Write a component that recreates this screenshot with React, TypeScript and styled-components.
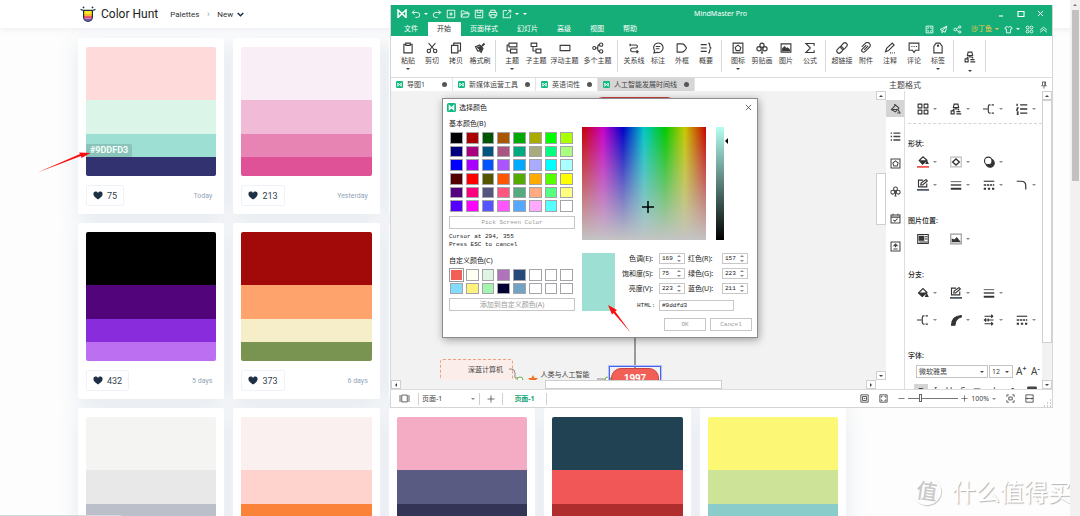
import React from "react";
import styled, { createGlobalStyle, css } from "styled-components";

const UI = `"Noto Sans", "Noto Sans CJK SC", sans-serif`;
const MONO = `"Liberation Mono", "Noto Sans CJK SC", monospace`;
const WEB = `Roboto, "Noto Sans CJK SC", sans-serif`;

const GlobalStyle = createGlobalStyle`
  *, *::before, *::after { box-sizing: border-box; }
  html, body { margin: 0; height: 100%; overflow: hidden; }
  body { font-family: ${UI}; background: #fdfdfd; }
  button, input, select { font: inherit; color: inherit; margin: 0; padding: 0; border: 0; background: none; border-radius: 0; }
  svg { display: block; flex: none; }
`;

/* ---------- icons ---------- */

const icons: Record<string, React.ReactNode> = {
  undo: <path d="M5.5 2 2 5.5 5.5 9M2.500 5.500H10a4 4 0 0 1 0 8H7" />,
  redo: <path d="M10.500 2 14 5.500 10.500 9M13.500 5.500H6a4 4 0 0 0 0 8h3" />,
  add: <path d="M2 2h12v12H2zM8 5v6M5 8h6" />,
  open: <path d="M2 13V3h4l1.500 2H13v2.500M2 13l2.500-5.500h10.500L13 13z" />,
  save: <path d="M2 2h12v12H2zM5 2v4h6V2M4.500 10.500h7" />,
  print: <path d="M4.500 5V2h7v3M4.500 11H2V5.500h12V11h-2.500M4.500 9h7v5h-7z" />,
  share: <path d="M8 2.500H2V14h11.500V9M7 9.500 14 2.500M10 2h4v4" />,
  full: <path d="M2 2h12v12H2zM5 7V5h2M9 5h2v2M11 9v2H9M7 11H5V9" />,
  send: <path d="M14 2 2 8l3.500 2L14 2l-3 11-4-2.500M5.500 10v4L7.500 11" />,
  nodes: <><circle cx="4" cy="8" r="2.300" /><circle cx="12" cy="3.500" r="2" /><circle cx="12" cy="12.500" r="2" /><path d="M6 7l4.200-2.500M6 9l4.200 2.500" /></>,
  shirt: <path d="M5.500 2.500 1.500 5 3 8l1.500-.5V14h7V7.500L13 8l1.500-3-4-2.500c-.5 2-4.500 2-5 0z" />,
  four: <><circle cx="4.500" cy="4.500" r="2.500" /><circle cx="11.500" cy="4.500" r="2.500" /><circle cx="4.500" cy="11.500" r="2.500" /><circle cx="11.500" cy="11.500" r="2.500" /></>,
  up: <path d="M2 9l6-5 6 5M2 13l6-5 6 5" />,
  paste: <path d="M5 3H2.500v11.500h11V3H11M5 1.500h6v3H5z" />,
  cut: <><circle cx="3.800" cy="12" r="2.300" /><circle cx="12.200" cy="12" r="2.300" /><path d="M5.200 10 12.500 1.500M10.800 10 3.500 1.500" /></>,
  copy: <path d="M2 4.500h8.500v10H2zM5 4.500v-3h9V12h-3.500" />,
  brush: <><path d="M10.500 5.500 14 2" strokeWidth="2.400" /><path d="M2 6.500 7.500 4l4.500 4.500L9.500 14 7.500 11.500 5 12z" /><path d="M5 7.500 9 6l2 2.500-1.500 3z" fill="currentColor" /></>,
  topic: <path d="M4 1.500h10.500v5H4zM6 9.500h8.500v5H6zM4 4H1.500v8H6" />,
  sub: <path d="M1.500 1.500H9v4.500H1.500zM8 9.500h6.500v5H8zM4 6v6h4" />,
  float: <path d="M1.500 4.500h13v7h-13z" />,
  multi: <><circle cx="3" cy="8" r="2" /><path d="M5 8h2.500M10 3.500Q7.500 3.500 7.500 8T10 12.500" /><circle cx="12.200" cy="3.500" r="2.200" /><circle cx="12.200" cy="12.500" r="2.200" /></>,
  relation: <path d="M2 2.500l2 1.500-2 1.500M5 4h5.500a2 2 0 0 1 0 4H6a2.500 2.500 0 0 0 0 5h7M11.500 11l2 2-2 2" />,
  callout: <path d="M2.500 14.500l1-3A6.300 6.300 0 1 1 7 13.800zM5 6h6M5 9h5" />,
  frame: <path d="M1.500 2.500H8q3 0 6 5.500-3 5.500-6 5.500H1.500z" strokeLinejoin="round" />,
  summary: <path d="M1 3.500h8M1 8h8M1 12.500h8M11 1.500c2 0 2 1 2 3s0 3 2 3.500c-2 .5-2 1.500-2 3.500s0 3-2 3" />,
  mark: <path d="M1.500 1.500h13v13h-13zM8 4.200l3.800 3-1.400 4.300H5.600L4.200 7.200z" />,
  clover: <><circle cx="8" cy="4.300" r="2.800" /><circle cx="4" cy="9" r="2.800" /><circle cx="12" cy="9" r="2.800" /><path d="M8 7v7.500M6.500 14.500h3" /></>,
  picture: <><path d="M1.500 2.500h13v11h-13z" /><path d="M3.500 11.500V9L6 6.500l2.500 2.500L10 8l2.500 2v1.500z" fill="currentColor" /></>,
  sigma: <path d="M13.500 5V2h-11l6 6-6 6h11v-3" />,
  link: <g transform="rotate(-45 8 8)"><rect x="-.5" y="5" width="9.500" height="6" rx="3" /><rect x="7" y="5" width="9.500" height="6" rx="3" /></g>,
  clip: <g transform="rotate(-45 8 8)"><path d="M11 5.500H3.500a2.500 2.500 0 0 0 0 5H13a4 4 0 0 0 0-7.500H5M4.500 8H12" /></g>,
  note: <path d="M2 13l1.500-4.500L11 1.500l2.500 2.500L6 11.500zM8 14.500h1.500M11 14.500h1M13.500 14.500h1" />,
  comment: <path d="M1.500 1.500h13v9.500H10l-2 3-2-3H1.500zM4.500 6H6M7.500 6H9M10.500 6H12" />,
  tag: <><path d="M2.500 14.500V5.500l3-4h5l3 4v9z" /><circle cx="8" cy="5" r=".8" /></>,
  org: <path d="M5.500 1.500h5l1 4.500h-7zM8 6v2M3.500 10.500 5 8h6l1 2M1.500 10.500h4v4h-4zM8.500 11.500H14M8.500 14.500H15" />,
  grid: <path d="M1.500 1.500h5v5h-5zM9.500 1.500h5v5h-5zM1.500 9.500h5v5h-5zM9.500 9.500h5v5h-5z" strokeLinejoin="round" />,
  branch: <path d="M0 8h6M10 2.500H9Q7 2.500 7 5v6q0 2.500 2 2.500h1M11.500 2.500h3M11.500 13.500h3" />,
  numbered: <path d="M5.500 2.500H15M5.500 8H15M5.500 13.500H15M1.500 1v3M1 6.500h1.500L1 9.500h1.500M1 12h1.500v3H1" strokeWidth="1.800" />,
  list: <path d="M5 3h10M5 8h10M5 13h10M1 3h2M1 8h2M1 13h2" strokeWidth="2" />,
  format: <path d="M2 9.500 8 3l5 4.500-5 5.500zM3 9.500h9.500M12 10l2.500 4.500h-4M6 1.500 9 4" />,
  calendar: <path d="M1.500 3h13v11.500h-13zM1.500 6h13M4.500 1v3M11.500 1v3M5 10l2 2 4-4" />,
  upload: <><path d="M1.500 1.500h13v13h-13zM8 9V6M5 11.500h6" /><path d="M5.500 7 8 4.500 10.500 7z" fill="currentColor" /></>,
  fill: <><path d="M2 8 8 2l5 5-6 5.500z" /><path d="M3 8h9.500L7 12zM13 9.500l1.500 3h-3z" fill="currentColor" /></>,
  fillRed: <><path d="M3 6 8 1l5 4.500-5.500 5z" /><path d="M4 6.500h8.500L7.500 10.500zM13.500 7.500l1.200 2.500h-2.500z" fill="currentColor" /><path d="M0 14.500h16" stroke="#f2564d" strokeWidth="2.400" /></>,
  shape: <><path d="M1 1.500h14v13H1z" stroke="#bbb" /><path d="M3.500 8 8 4l4.500 4L8 12z" strokeWidth="1.800" /></>,
  shadow: <><circle cx="9.500" cy="9.500" r="5.500" fill="currentColor" /><circle cx="7" cy="6.500" r="5" fill="#fff" /></>,
  line: <><path d="M8 1.500H2V10.500h11V6" /><path d="M5 8l.5-2.500L12 .8 13.800 2.500 7.500 8z" /><path d="M0 14.500h16" stroke="#4d5968" strokeWidth="2.400" /></>,
  weight: <><path d="M1 3.500h14" strokeWidth="1" /><path d="M1 8h14" strokeWidth="1.800" /><path d="M1 13h14" strokeWidth="2.600" /></>,
  dashes: <><path d="M1 3h14" /><path d="M1 8h14" strokeDasharray="3 1" strokeWidth="1.800" /><path d="M1 13h14" strokeDasharray="3 2.500" strokeWidth="2.600" /></>,
  corner: <path d="M1 3h6q6 0 6 6v5" strokeWidth="1.600" />,
  curve: <path d="M2 15Q2 3 15 2V4Q7 6 6.500 15z" fill="currentColor" />,
  arrows: <path d="M2 3h10M1 8h13M2 13h10M11 1l2 2-2 2M4 6 2 8l2 2M11 11l2 2-2 2M7 6v4" />,
  layout: <><path d="M1 2h14v12H1z" /><path d="M3 4.500h6v5H3z" fill="currentColor" /><path d="M10.500 5H14M10.500 8H14M3 12H14" /></>,
  image: <><path d="M1 1.500h14v13H1z" stroke="#999" /><path d="M3 11.500V8.500l3 1 3-3 4 5z" fill="currentColor" /></>,
  fit: <path d="M1.500 1.500h13v13h-13zM4.500 4.500h7v7h-7zM6.500 8h3" />,
  corners: <path d="M1.500 1.500h13v13h-13zM4 6.500V4h2.500M9.500 4H12v2.500M12 9.500V12H9.500M6.500 12H4V9.500" />,
  focus: <path d="M1.500 5V1.500H5M11 1.500h3.500V5M14.500 11v3.500H11M5 14.500H1.500V11M5 5.500h6v5H5z" />,
  width: <path d="M1.500 1.500h13v13h-13zM1.500 8h13M4 6.500 2.500 8 4 9.500M12 6.500 13.500 8 12 9.500" />,
  pages: <path d="M4 3h8v10H4zM1.500 3v10M14.500 3v10" />,
  plus: <path d="M8 1v14M1 8h14" />,
  minus: <path d="M1 8h14" />,
  minimise: <path d="M4 12h8" />,
  close: <path d="M2 2l12 12M14 2 2 14" />,
  square: <path d="M2 3h12v10H2z" />,
  pin: <path d="M4 2h8M5 2v7M11 2v7M9.500 2v7M2.500 9.500h11M8 10v5" />,
  box: <><path d="M1 2h14v12H1z" /><path d="M1 3h14" strokeWidth="4" /></>,
};

const Icon = ({ name, size = 12, weight = 1.5 }: { name: string; size?: number; weight?: number }) => (
  <svg width={size} height={size} viewBox="0 0 16 16" fill="none" stroke="currentColor" strokeWidth={weight} aria-hidden="true">
    {icons[name]}
  </svg>
);

const Caret = styled.span<{ $soft?: boolean }>`
  flex: none;
  width: 0;
  height: 0;
  border: 2px solid transparent;
  border-top-color: ${(p) => (p.$soft ? "#8a8a8a" : "currentColor")};
  border-bottom: 0;
`;

const AppMark = ({ size }: { size: number }) => (
  <svg width={size} height={size} viewBox="0 0 12 12" aria-hidden="true">
    <rect width="12" height="12" rx="2" fill="#12b981" />
    <path d="M3 9V3.500l3 3 3-3V9L6 6z" fill="none" stroke="#fff" strokeWidth="1.500" />
  </svg>
);

/* ---------- palette site ---------- */

const Site = styled.div`
  position: relative;
  height: 100vh;
  overflow: hidden;
  font-family: ${WEB};
`;

const SiteHeader = styled.header`
  position: relative;
  z-index: 1;
  display: flex;
  align-items: center;
  height: 28px;
  padding-left: 80px;
  background: #fff;
  box-shadow: 0 1px 6px rgba(60, 90, 130, 0.1);
  color: #263238;
`;

const Brand = styled.a`
  display: flex;
  align-items: center;
  gap: 5px;
  margin-right: 12px;
  font-size: 12px;
  color: #222;
  text-decoration: none;
`;

const Crumb = styled.a`
  display: flex;
  align-items: center;
  gap: 4px;
  font-size: 8px;
  color: #333;
  text-decoration: none;
`;

const Separator = styled.span`
  width: 18px;
  text-align: center;
  font-size: 9px;
  color: #8a99a8;
`;

const PaletteGrid = styled.main`
  display: grid;
  grid-template-columns: repeat(5, 1fr);
  gap: 9px;
  padding: 10px 234px 0 78px;
  isolation: isolate;
`;

const Card = styled.article`
  position: relative;
  height: 176px;
  padding: 9px 8px;
  border-radius: 3px;
  background: #fff;
  &::before {
    content: "";
    position: absolute;
    z-index: -1;
    inset: 0;
    box-shadow: 0 5px 20px rgba(60, 100, 150, 0.13);
  }
`;

const Swatches = styled.div`
  display: grid;
  grid-template-rows: 53px 34px 23px 19px;
  overflow: hidden;
  border-radius: 2px;
`;

const Band = styled.div<{ $color: string }>`
  display: flex;
  align-items: flex-end;
  background: ${(p) => p.$color};
`;

const HexTag = styled.span`
  padding: 0 4px;
  background: rgba(0, 0, 0, 0.12);
  border-radius: 0 2px 0 0;
  color: #f4fffb;
  font-size: 9px;
  line-height: 13px;
  font-weight: 700;
`;

const CardFooter = styled.footer`
  display: flex;
  align-items: center;
  justify-content: space-between;
  margin-top: 9px;
  padding-right: 4px;
  color: #92a5b8;
  font-size: 7px;
`;

const LikeButton = styled.button`
  display: flex;
  align-items: center;
  gap: 4px;
  height: 21px;
  padding: 0 6px;
  border: 1px solid #edf3f9;
  border-radius: 2px;
  color: #33414e;
  font-size: 9px;
`;

const Heart = () => (
  <svg width="10" height="9" viewBox="0 0 10 9" aria-hidden="true">
    <path d="M5 8.600C2 6.500.4 5 .4 3A2.400 2.400 0 0 1 5 1.900 2.400 2.400 0 0 1 9.600 3c0 2-1.600 3.500-4.600 5.600z" fill="#1d3044" />
  </svg>
);

const SiteScrollbar = styled.div`
  position: absolute;
  z-index: 2;
  top: 0;
  right: 0;
  bottom: 0;
  display: flex;
  flex-direction: column;
  align-items: center;
  width: 10px;
  padding-top: 4px;
  background: #f1f1f1;
  color: #777;
  ${Caret} { transform: rotate(180deg); }
`;

const SiteThumb = styled.div`
  width: 7px;
  height: 171px;
  margin-top: 4px;
  background: #c1c1c1;
`;

const StatusBubble = styled.div`
  position: absolute;
  left: 0;
  bottom: 0;
  width: 121px;
  height: 1px;
  background: #d5d8dc;
`;

const Watermark = styled.div`
  position: absolute;
  right: 8px;
  bottom: 8px;
  display: flex;
  align-items: center;
  gap: 11px;
  color: #fff;
  font-family: "Noto Sans CJK SC", sans-serif;
  font-size: 24px;
  line-height: 34px;
  text-shadow: 1px 1px 1px #b4b4b4;
  white-space: nowrap;
`;

const WatermarkSeal = styled.span`
  width: 28px;
  height: 28px;
  border: 1px solid #fff;
  border-radius: 50%;
  box-shadow: 1px 1px 1px #c4c4c4;
  font-size: 21px;
  font-weight: 500;
  line-height: 25px;
  text-align: center;
  color: #c9c9c9;
  text-shadow: none;
  transform: rotate(8deg);
`;

type Palette = { colors: string[]; likes?: string; age?: string; tag?: string };

const palettes: Palette[] = [
  { colors: ["#ffdada", "#dbf6e9", "#9ddfd3", "#31326f"], likes: "75", age: "Today", tag: "#9DDFD3" },
  { colors: ["#faeef6", "#f1bad7", "#e884b4", "#e05297"], likes: "213", age: "Yesterday" },
  { colors: [] },
  { colors: [] },
  { colors: [] },
  { colors: ["#000000", "#52057b", "#892cdc", "#bc6ff1"], likes: "432", age: "5 days" },
  { colors: ["#a20a0a", "#ffa36c", "#f6eec9", "#799351"], likes: "373", age: "6 days" },
  { colors: [] },
  { colors: [] },
  { colors: [] },
  { colors: ["#f4f4f2", "#e8e8e8", "#bbbfca", "#495464"] },
  { colors: ["#faf0ef", "#ffd3cd", "#fb8339", "#2b2b2b"] },
  { colors: ["#f4abc4", "#595b83", "#333456", "#060930"] },
  { colors: ["#214252", "#f25757", "#af2d2d", "#7a1c1c"] },
  { colors: ["#fdf776", "#cde398", "#8accca", "#5aa2b0"] },
];

const PaletteCard = ({ p }: { p: Palette }) => (
  <Card>
    <Swatches>
      {p.colors.map((c, i) => (
        <Band key={c} $color={c}>{p.tag && i === 2 && <HexTag>{p.tag}</HexTag>}</Band>
      ))}
    </Swatches>
    {p.likes && (
      <CardFooter>
        <LikeButton type="button"><Heart />{p.likes}</LikeButton>
        <span>{p.age}</span>
      </CardFooter>
    )}
  </Card>
);

/* ---------- MindMaster window ---------- */

const AppWindow = styled.section`
  position: absolute;
  z-index: 3;
  top: 5px;
  left: 390px;
  right: 27px;
  height: 403px;
  display: flex;
  flex-direction: column;
  border: 1px solid #d5d5d5;
  border-top: 0;
  background: #fff;
  color: #444;
  font-family: ${UI};
  font-size: 7px;
  line-height: 10px;
  white-space: nowrap;
`;

const GreenBar = styled.div`
  background: #16ae78;
  color: #fff;
`;

const TitleRow = styled.div`
  display: grid;
  grid-template-columns: 1fr auto 1fr;
  align-items: center;
  height: 17px;
  padding: 0 8px 0 6px;
`;

const QuickTools = styled.div`
  display: flex;
  align-items: center;
  gap: 4px;
`;

const WindowButtons = styled.div`
  display: flex;
  justify-content: flex-end;
  gap: 12px;
`;

const IconButton = styled.button`
  display: flex;
  align-items: center;
  gap: 3px;
`;

const MenuRow = styled.nav`
  display: flex;
  height: 14px;
  padding: 0 4px;
`;

const MenuTab = styled.button<{ $active?: boolean }>`
  padding: 0 10px 0 9px;
  ${(p) => p.$active && css`background: #fff; color: #333;`}
`;

const MenuTools = styled.div`
  display: flex;
  align-items: center;
  gap: 5px;
  margin-left: auto;
`;

const UserButton = styled(IconButton)`
  margin-left: 4px;
  color: #f7c948;
`;

const Ribbon = styled.div`
  display: flex;
  flex: none;
  height: 42px;
  padding: 4px 0 5px 1px;
  border-bottom: 1px solid #dcdcdc;
`;

const RibbonGroup = styled.div`
  display: flex;
  padding: 0 3px 0 4px;
  border-right: 1px solid #d8d8d8;
`;

const RibbonButton = styled.button<{ $wide?: boolean; $low?: boolean }>`
  display: flex;
  flex-direction: column;
  align-items: center;
  width: ${(p) => (p.$wide ? 33 : 24)}px;
  padding-top: ${(p) => (p.$low ? 11 : 2)}px;
  gap: ${(p) => (p.$low ? 7 : 2)}px;
  color: #3a3a3a;
`;

const Workspace = styled.div`
  display: flex;
  flex: 1;
  min-height: 0;
`;

const CanvasColumn = styled.div`
  display: flex;
  flex: 1;
  flex-direction: column;
  min-width: 0;
`;

const DocTabs = styled.div`
  display: flex;
  flex: none;
  height: 13px;
`;

const DocTab = styled.button<{ $active?: boolean }>`
  display: flex;
  align-items: center;
  gap: 4px;
  padding: 0 5px;
  border-right: 1px solid #e4e4e4;
  background: ${(p) => (p.$active ? "#d6d6d6" : "#fff")};
  &::after {
    content: "";
    width: 5px;
    height: 5px;
    margin-left: 3px;
    border-radius: 50%;
    background: #555;
  }
  &:first-child::after { margin-left: 13px; }
`;

const CanvasRow = styled.div`
  display: flex;
  flex: 1;
  min-height: 0;
`;

const Canvas = styled.div`
  position: relative;
  flex: 1;
  overflow: hidden;
  background: #f2f2f2;
`;

const Track = styled.div<{ $horizontal?: boolean }>`
  display: flex;
  flex: none;
  flex-direction: ${(p) => (p.$horizontal ? "row" : "column")};
  ${(p) => (p.$horizontal ? "height: 9px; margin-right: 10px;" : "width: 10px;")}
  background: #f2f2f2;
`;

const TrackButton = styled.button<{ $turn: number }>`
  display: grid;
  flex: none;
  place-items: center;
  width: 10px;
  height: 9px;
  border: 1px solid #cfcfcf;
  background: #fff;
  ${Caret} { transform: rotate(${(p) => p.$turn}deg); }
`;

const TrackSpace = styled.div<{ $grow: number; $thumb?: boolean }>`
  flex: ${(p) => p.$grow} 0 0;
  ${(p) => p.$thumb && css`border: 1px solid #cfcfcf; background: #fff;`}
`;

const Connectors = styled.svg`
  position: absolute;
  inset: 0;
`;

const Node = styled.div<{ $x: number; $y: number; $w: number; $h: number; $kind?: "red" | "dashed" | "selection" }>`
  position: absolute;
  left: ${(p) => p.$x}px;
  top: ${(p) => p.$y}px;
  width: ${(p) => p.$w}px;
  height: ${(p) => p.$h}px;
  text-align: center;
  ${(p) => p.$kind === "red" && css`
    border: 1px solid #c8453d; border-radius: 10px; background: #f25f57;
    color: #fff; font: bold 10px/20px "Liberation Sans", sans-serif;`}
  ${(p) => p.$kind === "dashed" && css`
    padding: 5px 9px 0 0; border: 1px dashed #f0a07a; border-radius: 3px; background: #fbeeea; text-align: right;`}
  ${(p) => p.$kind === "selection" && css`border: 1px solid #4664f0; outline: 1px solid #b4c0fa;`}
`;

const Panel = styled.aside`
  display: flex;
  flex: none;
  flex-direction: column;
  width: 166px;
  background: #fff;
`;

const PanelTitle = styled.div`
  display: flex;
  flex: none;
  align-items: center;
  justify-content: space-between;
  height: 13px;
  padding: 0 4px 0 3px;
  font-size: 8px;
`;

const PanelBody = styled.div`
  display: flex;
  flex: 1;
  min-height: 0;
`;

const SideTabs = styled.div`
  flex: none;
  width: 19px;
  padding-top: 9px;
  border-right: 1px solid #dedede;
`;

const SideTabList = styled.div`
  display: flex;
  flex-direction: column;
  justify-content: space-between;
  height: 155px;
`;

const SideTab = styled.button<{ $active?: boolean }>`
  display: grid;
  place-items: center;
  height: 17px;
  background: ${(p) => (p.$active ? "#d4d4d4" : "none")};
`;

const PanelContent = styled.div`
  flex: 1;
  min-width: 0;
  padding: 11px 0 0 3px;
  overflow: hidden;
`;

const Dotted = styled.hr`
  height: 0;
  margin: 7px 0 -9px;
  border: 0;
  border-top: 1px dashed #d5d5d5;
`;

const SectionTitle = styled.h2`
  margin: 24px 0 6px;
  font-size: 7px;
  line-height: 10px;
  font-weight: 500;
  color: #222;
`;

const ToolRow = styled.div<{ $gap?: number }>`
  display: flex;
  height: 14px;
  margin-top: ${(p) => p.$gap ?? 0}px;
  padding-left: 9px;
`;

const ToolButton = styled.button`
  display: flex;
  flex: none;
  align-items: center;
  gap: 4px;
  width: 33px;
  color: #333;
`;

const FontRow = styled.div`
  display: flex;
  align-items: center;
  gap: 1px;
  height: 13px;
  margin-top: -2px;
  padding-left: 8px;
`;

const SelectBox = styled.label<{ $w: number; $plain?: boolean }>`
  position: relative;
  display: flex;
  flex: none;
  align-items: center;
  width: ${(p) => p.$w}px;
  height: 13px;
  padding: 0 3px 0 2px;
  border: ${(p) => (p.$plain ? "0" : "1px solid #c4c4c4")};
  select { flex: 1; min-width: 0; appearance: none; outline: 0; font-size: 7px; }
`;

const FontSizeButton = styled.button`
  flex: none;
  width: 14px;
  padding-left: 2px;
  font-size: 10px;
  line-height: 13px;
  text-align: left;
  sup { font-size: 7px; line-height: 0; font-weight: 700; }
`;

const StyleRow = styled.div`
  display: flex;
  height: 14px;
  margin-top: 6px;
  padding-left: 6px;
`;

const StyleButton = styled.button<{ $active?: boolean; $wide?: boolean }>`
  display: grid;
  flex: none;
  place-items: center;
  width: ${(p) => (p.$wide ? 19 : 14)}px;
  background: ${(p) => (p.$active ? "#d4d4d4" : "none")};
  font-size: 9px;
`;

const StatusBar = styled.footer`
  display: flex;
  flex: none;
  align-items: center;
  height: 18px;
  border-top: 1px solid #dcdcdc;
`;

const StatusCell = styled.div<{ $w: number }>`
  display: flex;
  align-items: center;
  justify-content: center;
  width: ${(p) => p.$w}px;
  height: 12px;
  border-right: 1px solid #d0d0d0;
`;

const PageTab = styled.button`
  color: #12a570;
  font-weight: 700;
`;

const ZoomTools = styled.div`
  display: flex;
  align-items: center;
  gap: 10px;
  margin-left: auto;
`;

const ZoomSlider = styled.div`
  display: flex;
  align-items: center;
  gap: 3px;
`;

const Range = styled.input`
  width: 50px;
  height: 9px;
  appearance: none;
  &::-webkit-slider-runnable-track { height: 1px; background: #777; }
  &::-webkit-slider-thumb { appearance: none; width: 3px; height: 8px; margin-top: -4px; border: 1px solid #666; background: #fff; }
`;

const Grip = () => (
  <svg width="8" height="16" viewBox="0 0 8 16" aria-hidden="true">
    <path d="M6 9h1M6 12h1M3 12h1M6 15h1M3 15h1M0 15h1" stroke="#999" />
  </svg>
);

/* ---------- colour dialog ---------- */

const Dialog = styled.div`
  position: absolute;
  z-index: 1;
  top: 93px;
  left: 51px;
  width: 316px;
  height: 240px;
  border: 1px solid #8c8c8c;
  background: #fff;
  box-shadow: 1px 2px 8px rgba(0, 0, 0, 0.35);
  color: #222;
`;

const DialogTitle = styled.div`
  display: flex;
  align-items: center;
  gap: 3px;
  height: 17px;
  padding: 0 5px 0 4px;
  button { margin-left: auto; }
`;

const DialogBody = styled.div`
  display: flex;
  gap: 7px;
  padding: 1px 5px 0 6px;
`;

const SwatchColumn = styled.div`
  width: 126px;
`;

const PickerLabel = styled.h3`
  margin: 2px 0;
  font-size: 7px;
  line-height: 10px;
  font-weight: 400;
`;

const SwatchGrid = styled.div<{ $rows: number }>`
  display: grid;
  grid-template: repeat(${(p) => p.$rows}, 1fr) / repeat(8, 1fr);
  height: ${(p) => (p.$rows === 6 ? 82 : 27)}px;
  margin-bottom: 3px;
`;

const Swatch = styled.button<{ $color: string; $selected?: boolean }>`
  margin: 1px 2px 1px 1px;
  border: 1px solid #a4a4aa;
  background: ${(p) => p.$color};
  ${(p) => p.$selected && css`outline: 1px solid #999; outline-offset: 0; border-color: #fff;`}
`;

const DialogButton = styled.button`
  width: 100%;
  height: 13px;
  border: 1px solid #c6c6c6;
  color: #9a9a9a;
  font-family: ${MONO};
  font-size: 6px;
  line-height: 10px;
`;

const CjkButton = styled(DialogButton)`
  font-family: ${UI};
  font-size: 7px;
`;

const Hint = styled.p`
  margin: 4px 0 7px;
  font-family: ${MONO};
  font-size: 6px;
  line-height: 8px;
`;

const PickerColumn = styled.div`
  flex: 1;
  padding-top: 10px;
`;

const PickerRow = styled.div`
  display: flex;
  gap: 10px;
`;

const HueField = styled.div`
  position: relative;
  width: 124px;
  height: 113px;
  background:
    linear-gradient(to bottom, rgba(196, 196, 196, 0), #c4c4c4),
    linear-gradient(to right, #c80000, #c800c8 17%, #0000c8 33%, #00c8c8 50%, #00c800 67%, #c8c800 83%, #c80000);
`;

const Crosshair = styled.svg`
  position: absolute;
  left: 60px;
  top: 74px;
`;

const ValueStrip = styled.div`
  position: relative;
  width: 8px;
  background: linear-gradient(#b4fff1, #000);
`;

const ValueMarker = styled.span`
  position: absolute;
  left: 9px;
  top: 11px;
  border: 3px solid transparent;
  border-right-color: #000;
  border-left: 0;
`;

const ValuesRow = styled.div`
  display: flex;
  gap: 4px;
  margin-top: 13px;
`;

const Preview = styled.div`
  width: 33px;
  height: 58px;
  background: #9ddfd3;
`;

const FieldGrid = styled.div`
  display: grid;
  grid-template-columns: 37px 26px 31px 26px;
  grid-auto-rows: 11px;
  gap: 4px 3px;
  align-items: center;
`;

const FieldLabel = styled.label<{ $end?: boolean; $last?: boolean }>`
  padding-right: ${(p) => (p.$last ? 1 : 3)}px;
  padding-top: ${(p) => (p.$last ? 4 : 0)}px;
  text-align: ${(p) => (p.$end ? "right" : "left")};
`;

const HtmlLabel = styled(FieldLabel)`
  font: 6px/9px ${MONO};
`;

const NumberBox = styled.div`
  display: flex;
  align-items: center;
  height: 11px;
  padding: 0 3px 0 2px;
  border: 1px solid #c8c8c8;
  input { flex: 1; min-width: 0; font: 6px/9px ${MONO}; outline: 0; }
`;

const Spinner = styled.span`
  display: flex;
  flex-direction: column;
  gap: 3px;
  color: #555;
  ${Caret}:first-child { transform: rotate(180deg); }
`;

const HtmlBox = styled.input`
  && { grid-column: span 3; width: 75px; height: 11px; margin-top: 4px; padding-left: 2px; border: 1px solid #c8c8c8; font: 6px/9px ${MONO}; }
`;

const DialogActions = styled.div`
  display: flex;
  justify-content: flex-end;
  gap: 4px;
  margin-top: 7px;
  ${DialogButton} { width: 42px; }
`;

const ArrowLayer = styled.svg`
  position: absolute;
  z-index: 4;
  inset: 0;
  pointer-events: none;
`;

/* ---------- data ---------- */

type Tool = { icon: string; label: string; wide?: boolean; menu?: boolean };

const ribbon: Tool[][] = [
  [
    { icon: "paste", label: "粘贴", menu: true },
    { icon: "cut", label: "剪切" },
    { icon: "copy", label: "拷贝" },
    { icon: "brush", label: "格式刷" },
  ],
  [
    { icon: "topic", label: "主题", menu: true },
    { icon: "sub", label: "子主题" },
    { icon: "float", label: "浮动主题", wide: true },
    { icon: "multi", label: "多个主题", wide: true },
  ],
  [
    { icon: "relation", label: "关系线" },
    { icon: "callout", label: "标注" },
    { icon: "frame", label: "外框" },
    { icon: "summary", label: "概要" },
  ],
  [
    { icon: "mark", label: "图标", menu: true },
    { icon: "clover", label: "剪贴画" },
    { icon: "picture", label: "图片" },
    { icon: "sigma", label: "公式" },
  ],
  [
    { icon: "link", label: "超链接" },
    { icon: "clip", label: "附件" },
    { icon: "note", label: "注释" },
    { icon: "comment", label: "评论" },
    { icon: "tag", label: "标签", menu: true },
  ],
];

const basicColors = (
  "000000 aa0000 005500 aa5500 00aa00 aaaa00 00ff00 aaff00 " +
  "00007f aa007f 00557f aa557f 00aa7f aaaa7f 00ff7f aaff7f " +
  "0000ff aa00ff 0055ff aa55ff 00aaff aaaaff 00ffff aaffff " +
  "550000 ff0000 555500 ff5500 55aa00 ffaa00 55ff00 ffff00 " +
  "55007f ff007f 55557f ff557f 55aa7f ffaa7f 55ff7f ffff7f " +
  "5500ff ff00ff 5555ff ff55ff 55aaff ffaaff 55ffff ffffff"
).split(" ");

const customColors = (
  "f25f57 fffff2 e0f4e4 b072b8 264a7a ffffff ffffff ffffff " +
  "84dcfa fff27a a4f4b0 000032 72a2c4 ffffff ffffff ffffff"
).split(" ");

const fields = [
  ["色调(E):", "169"], ["红色(R):", "157"],
  ["饱和度(S):", "75"], ["绿色(G):", "223"],
  ["亮度(V):", "223"], ["蓝色(U):", "211"],
];

const Tools = ({ names, gap, flat = [] }: { names: string[]; gap?: number; flat?: string[] }) => (
  <ToolRow $gap={gap}>
    {names.map((n) => (
      <ToolButton type="button" key={n} aria-label={n}>
        <Icon name={n} size={12} />
        {!flat.includes(n) && <Caret $soft />}
      </ToolButton>
    ))}
  </ToolRow>
);

const ColorDialog = () => (
  <Dialog role="dialog" aria-label="选择颜色">
    <DialogTitle>
      <AppMark size={9} />
      选择颜色
      <button type="button" aria-label="关闭"><Icon name="close" size={7} /></button>
    </DialogTitle>
    <DialogBody>
      <SwatchColumn>
        <PickerLabel>基本颜色(B)</PickerLabel>
        <SwatchGrid $rows={6}>
          {basicColors.map((c) => <Swatch key={c} type="button" $color={`#${c}`} aria-label={c} />)}
        </SwatchGrid>
        <DialogButton type="button">Pick Screen Color</DialogButton>
        <Hint>Cursor at 294, 355<br />Press ESC to cancel</Hint>
        <PickerLabel>自定义颜色(C)</PickerLabel>
        <SwatchGrid $rows={2}>
          {customColors.map((c, i) => <Swatch key={i} type="button" $color={`#${c}`} $selected={i === 0} aria-label={c} />)}
        </SwatchGrid>
        <CjkButton type="button">添加到自定义颜色(A)</CjkButton>
      </SwatchColumn>
      <PickerColumn>
        <PickerRow>
          <HueField>
            <Crosshair width="12" height="12"><path d="M6 0v12M0 6h12" stroke="#000" strokeWidth="1.500" /></Crosshair>
          </HueField>
          <ValueStrip><ValueMarker /></ValueStrip>
        </PickerRow>
        <ValuesRow>
          <Preview />
          <FieldGrid>
            {fields.map(([label, value], i) => (
              <React.Fragment key={label}>
                <FieldLabel htmlFor={`field-${i}`} $end={i % 2 === 0}>{label}</FieldLabel>
                <NumberBox>
                  <input id={`field-${i}`} defaultValue={value} />
                  <Spinner><Caret $soft /><Caret $soft /></Spinner>
                </NumberBox>
              </React.Fragment>
            ))}
            <HtmlLabel htmlFor="field-html" $end $last>HTML:</HtmlLabel>
            <HtmlBox id="field-html" defaultValue="#9ddfd3" />
          </FieldGrid>
        </ValuesRow>
        <DialogActions>
          <DialogButton type="button">OK</DialogButton>
          <DialogButton type="button">Cancel</DialogButton>
        </DialogActions>
      </PickerColumn>
    </DialogBody>
  </Dialog>
);

const MindMaster = () => (
  <AppWindow>
    <GreenBar>
      <TitleRow>
        <QuickTools>
          <svg width="10" height="9" viewBox="0 0 10 9" aria-hidden="true"><path d="M1 8.500V1l4 3.500L9 1v7.500L5 4.800z" fill="none" stroke="#fff" strokeWidth="1.500" /></svg>
          {["undo", "redo", "add", "open", "save", "print", "share"].map((n) => (
            <IconButton type="button" key={n} aria-label={n}>
              <Icon name={n} size={10} weight={1.4} />
              {(n === "undo" || n === "share") && <Caret />}
            </IconButton>
          ))}
          <Caret />
        </QuickTools>
        <span>MindMaster Pro</span>
        <WindowButtons>
          {["minimise", "square", "close"].map((n) => (
            <IconButton type="button" key={n} aria-label={n}><Icon name={n} size={n === "close" ? 7 : 8} weight={2.2} /></IconButton>
          ))}
        </WindowButtons>
      </TitleRow>
      <MenuRow>
        {["文件", "开始", "页面样式", "幻灯片", "高级", "视图", "帮助"].map((m) => (
          <MenuTab type="button" key={m} $active={m === "开始"}>{m}</MenuTab>
        ))}
        <MenuTools>
          {["full", "send", "nodes"].map((n) => (
            <IconButton type="button" key={n} aria-label={n}><Icon name={n} size={9} /></IconButton>
          ))}
          <UserButton type="button">沙丁鱼<Caret /></UserButton>
          <IconButton type="button" aria-label="shirt"><Icon name="shirt" size={9} /><Caret /></IconButton>
          <IconButton type="button" aria-label="four"><Icon name="four" size={9} /></IconButton>
          <IconButton type="button" aria-label="up"><Icon name="up" size={9} /></IconButton>
        </MenuTools>
      </MenuRow>
    </GreenBar>
    <Ribbon>
      {ribbon.map((group, i) => (
        <RibbonGroup key={i}>
          {group.map((t) => (
            <RibbonButton type="button" key={t.label} $wide={t.wide}>
              <Icon name={t.icon} size={12} />
              {t.label}
              {t.menu && <Caret />}
            </RibbonButton>
          ))}
        </RibbonGroup>
      ))}
      <RibbonGroup>
        <RibbonButton type="button" $low aria-label="布局"><Icon name="org" size={12} /><Caret /></RibbonButton>
      </RibbonGroup>
    </Ribbon>
    <Workspace>
      <CanvasColumn>
        <DocTabs>
          {["导图1", "新媒体运营工具", "英语词性", "人工智能发展时间线"].map((t, i) => (
            <DocTab type="button" key={t} $active={i === 3}><AppMark size={7} />{t}</DocTab>
          ))}
        </DocTabs>
        <CanvasRow>
          <Canvas>
            <Node $x={202} $y={6} $w={84} $h={30} $kind="red" />
            <Node $x={49} $y={268} $w={73} $h={40} $kind="dashed">深蓝计算机</Node>
            <Node $x={148} $y={279} $w={52} $h={10}>人类与人工智能</Node>
            <Connectors width="100%" height="100%">
              <path d="M244 20V278" stroke="#9a9a9a" strokeWidth="2" />
              <path d="M118 278h2q4 0 4 4v5h3M206 288h10" fill="none" stroke="#888" />
              <path d="M142 284l1.500 3h3.500l-3 3h-4l-3-3h3.500z" fill="#f36f21" />
              <circle cx="129" cy="289" r="3" fill="#fff" stroke="#6bb536" />
              <circle cx="217" cy="289" r="3" fill="#fff" stroke="#6bb536" />
            </Connectors>
            <Node $x={218} $y={275} $w={52} $h={30} $kind="selection" />
            <Node $x={220} $y={277} $w={48} $h={24} $kind="red">1997</Node>
          </Canvas>
          <Track>
            <TrackButton type="button" $turn={180} aria-label="上"><Caret /></TrackButton>
            <TrackSpace $grow={74} />
            <TrackSpace $grow={50} $thumb />
            <TrackSpace $grow={148} />
            <TrackButton type="button" $turn={0} aria-label="下"><Caret /></TrackButton>
          </Track>
        </CanvasRow>
        <Track $horizontal>
          <TrackButton type="button" $turn={90} aria-label="左"><Caret /></TrackButton>
          <TrackSpace $grow={145} />
          <TrackSpace $grow={175} $thumb />
          <TrackSpace $grow={145} />
          <TrackButton type="button" $turn={-90} aria-label="右"><Caret /></TrackButton>
        </Track>
      </CanvasColumn>
      <Panel>
        <PanelTitle>主题格式<Icon name="pin" size={8} /></PanelTitle>
        <PanelBody>
          <SideTabs>
            <SideTabList>
              {["format", "list", "mark", "clover", "calendar", "upload"].map((n) => (
                <SideTab type="button" key={n} $active={n === "format"} aria-label={n}><Icon name={n} size={11} /></SideTab>
              ))}
            </SideTabList>
          </SideTabs>
          <PanelContent>
            <Tools names={["grid", "org", "branch", "numbered"]} />
            <Dotted />
            <SectionTitle>形状:</SectionTitle>
            <Tools names={["fillRed", "shape", "shadow"]} />
            <Tools names={["line", "weight", "dashes", "corner"]} gap={9} />
            <SectionTitle>图片位置:</SectionTitle>
            <Tools names={["layout", "image"]} flat={["layout"]} />
            <SectionTitle>分支:</SectionTitle>
            <Tools names={["fill", "line", "weight"]} />
            <Tools names={["branch", "curve", "arrows", "dashes"]} gap={13} />
            <SectionTitle>字体:</SectionTitle>
            <FontRow>
              <SelectBox $w={72}><select aria-label="字体"><option>微软雅黑</option></select><Caret /></SelectBox>
              <SelectBox $w={24}><select aria-label="字号"><option>12</option></select><Caret /></SelectBox>
              <FontSizeButton type="button">A<sup>+</sup></FontSizeButton>
              <FontSizeButton type="button">A<sup>-</sup></FontSizeButton>
            </FontRow>
            <StyleRow>
              <StyleButton type="button" $active><b>B</b></StyleButton>
              <StyleButton type="button"><i>I</i></StyleButton>
              <StyleButton type="button"><u>U</u></StyleButton>
              <StyleButton type="button"><s>S</s></StyleButton>
              <StyleButton type="button">≡</StyleButton>
              <StyleButton type="button" $wide>ab</StyleButton>
              <StyleButton type="button" $wide><b>A</b></StyleButton>
              <StyleButton type="button" $wide aria-label="边框"><Icon name="box" size={10} /></StyleButton>
            </StyleRow>
          </PanelContent>
          <Track>
            <TrackButton type="button" $turn={180} aria-label="上"><Caret /></TrackButton>
            <TrackSpace $grow={243} $thumb />
            <TrackSpace $grow={37} />
            <TrackButton type="button" $turn={0} aria-label="下"><Caret /></TrackButton>
          </Track>
        </PanelBody>
      </Panel>
    </Workspace>
    <StatusBar>
      <StatusCell $w={28}><Icon name="pages" size={11} weight={1.2} /></StatusCell>
      <StatusCell $w={61}>
        <SelectBox $w={58} $plain><select aria-label="页面"><option>页面-1</option></select><Caret $soft /></SelectBox>
      </StatusCell>
      <StatusCell $w={23}><Icon name="plus" size={8} /></StatusCell>
      <StatusCell $w={44}><PageTab type="button">页面-1</PageTab></StatusCell>
      <ZoomTools>
        <Icon name="fit" size={9} />
        <Icon name="corners" size={9} />
        <ZoomSlider>
          <Icon name="minus" size={7} />
          <Range type="range" aria-label="缩放" min={0} max={100} defaultValue={23} />
          <Icon name="plus" size={7} />
          <IconButton type="button">100%<Caret $soft /></IconButton>
        </ZoomSlider>
        <Icon name="focus" size={9} />
        <Icon name="width" size={9} />
        <Grip />
      </ZoomTools>
    </StatusBar>
    <ColorDialog />
  </AppWindow>
);

const BrandLogo = () => (
  <svg width="16" height="17" viewBox="0 0 16 17" aria-hidden="true">
    <clipPath id="pot"><path d="M4 4.500h8V11a4 4 0 0 1-8 0z" /></clipPath>
    <g clipPath="url(#pot)">
      <rect x="3" y="4" width="10" height="6" fill="#fde725" />
      <rect x="3" y="8" width="10" height="2" fill="#fbb829" />
      <rect x="3" y="10" width="10" height="2.500" fill="#f0566a" />
      <rect x="3" y="12.500" width="10" height="4" fill="#8a4fc0" />
    </g>
    <path d="M.6 3.200Q1.500 4.400 3.500 4.400h9q2 0 2.900-1.200M3.600 4.400V11a4.400 4.400 0 0 0 8.800 0V4.400" fill="none" stroke="#1d3044" strokeWidth="1.200" />
    <circle cx="3.500" cy="1.400" r=".9" fill="#1d3044" />
    <circle cx="12.500" cy="1.400" r=".9" fill="#1d3044" />
  </svg>
);

export default function App() {
  return (
    <Site>
      <GlobalStyle />
      <SiteHeader>
        <Brand href="#"><BrandLogo />Color Hunt</Brand>
        <Crumb href="#">Palettes</Crumb>
        <Separator>›</Separator>
        <Crumb href="#">
          New
          <svg width="7" height="5" viewBox="0 0 7 5" aria-hidden="true"><path d="M.7 1l2.800 2.800L6.300 1" fill="none" stroke="#1d3044" strokeWidth="1.500" /></svg>
        </Crumb>
      </SiteHeader>
      <PaletteGrid>
        {palettes.map((p, i) => <PaletteCard key={i} p={p} />)}
      </PaletteGrid>
      <MindMaster />
      <ArrowLayer width="100%" height="100%">
        <path d="M37.500 172.500 80 154l-1-1.500 11.500.5-9 5-.5-2z" fill="#fa0f0f" />
        <path d="M631 333 613.500 313l-1.500 1.500L608 305l9 5-1.800 1.500z" fill="#fa0f0f" />
      </ArrowLayer>
      <StatusBubble />
      <Watermark><WatermarkSeal>值</WatermarkSeal>什么值得买</Watermark>
      <SiteScrollbar><Caret /><SiteThumb /></SiteScrollbar>
    </Site>
  );
}
